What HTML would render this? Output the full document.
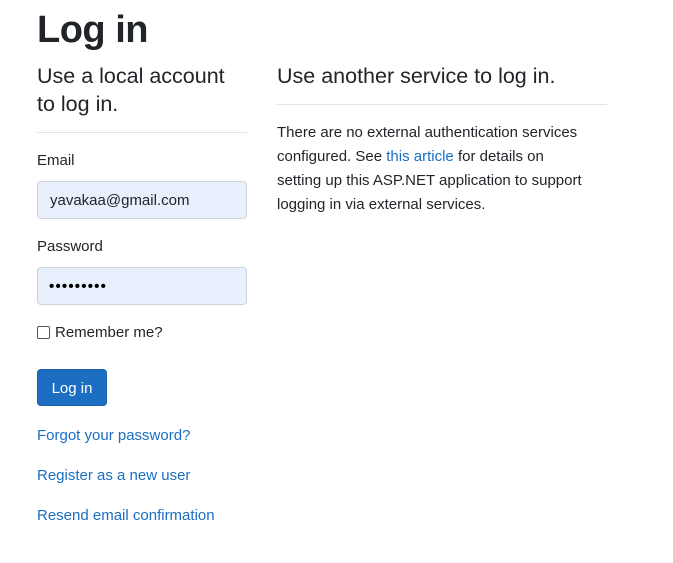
<!DOCTYPE html>
<html><head><style>
body{margin:0;background:#fff;font-family:"Liberation Sans",sans-serif;color:#212529;width:673px;height:563px;position:relative;overflow:hidden}
.a{position:absolute;white-space:nowrap}
.lbl{font-size:15px;line-height:20px}
.inp{position:absolute;left:37px;width:208px;height:36px;background:#e8f0fe;border:1px solid #ced4da;border-radius:4px;box-sizing:content-box}
.link{color:#1b6ec2;font-size:15px;line-height:20px}
</style></head><body>
<div class="a" style="left:37px;top:8px;font-size:38px;line-height:44px;font-weight:bold;letter-spacing:-0.5px">Log in</div>
<div class="a" style="left:37px;top:62px;font-size:21.5px;line-height:28px;font-weight:500">Use a local account<br>to log in.</div>
<div class="a" style="left:37px;top:132px;width:210px;height:1px;background:#e2e3e4"></div>
<div class="a lbl" style="left:37px;top:151px">Email</div>
<div class="inp" style="top:181px"></div>
<div class="a" style="left:50px;top:191px;font-size:15px;line-height:20px">yavakaa@gmail.com</div>
<div class="a lbl" style="left:37px;top:237px">Password</div>
<div class="inp" style="top:267px"></div>
<div class="a" style="left:49px;top:277px;font-size:15px;line-height:20px;letter-spacing:1.2px;font-weight:bold;color:#000">•••••••••</div>
<div class="a" style="left:37px;top:326px;width:11px;height:11px;border:1px solid #555;border-radius:2px;background:#fff"></div>
<div class="a lbl" style="left:55px;top:323px">Remember me?</div>
<div class="a" style="left:37px;top:369px;width:70px;height:37px;background:#1b6ec2;border:1px solid #1861ac;border-radius:4px;box-sizing:border-box;color:#fff;font-size:15px;line-height:37px;text-align:center">Log in</div>
<div class="a link" style="left:37px;top:426px">Forgot your password?</div>
<div class="a link" style="left:37px;top:466px">Register as a new user</div>
<div class="a link" style="left:37px;top:506px">Resend email confirmation</div>
<div class="a" style="left:277px;top:62px;font-size:21.5px;line-height:28px;font-weight:500">Use another service to log in.</div>
<div class="a" style="left:277px;top:104px;width:330px;height:1px;background:#e2e3e4"></div>
<div class="a" style="left:277px;top:121px;font-size:15px;line-height:24px">There are no external authentication services<br>configured. See <span style="color:#1b6ec2">this article</span> for details on<br>setting up this ASP.NET application to support<br>logging in via external services.</div>
</body></html>
